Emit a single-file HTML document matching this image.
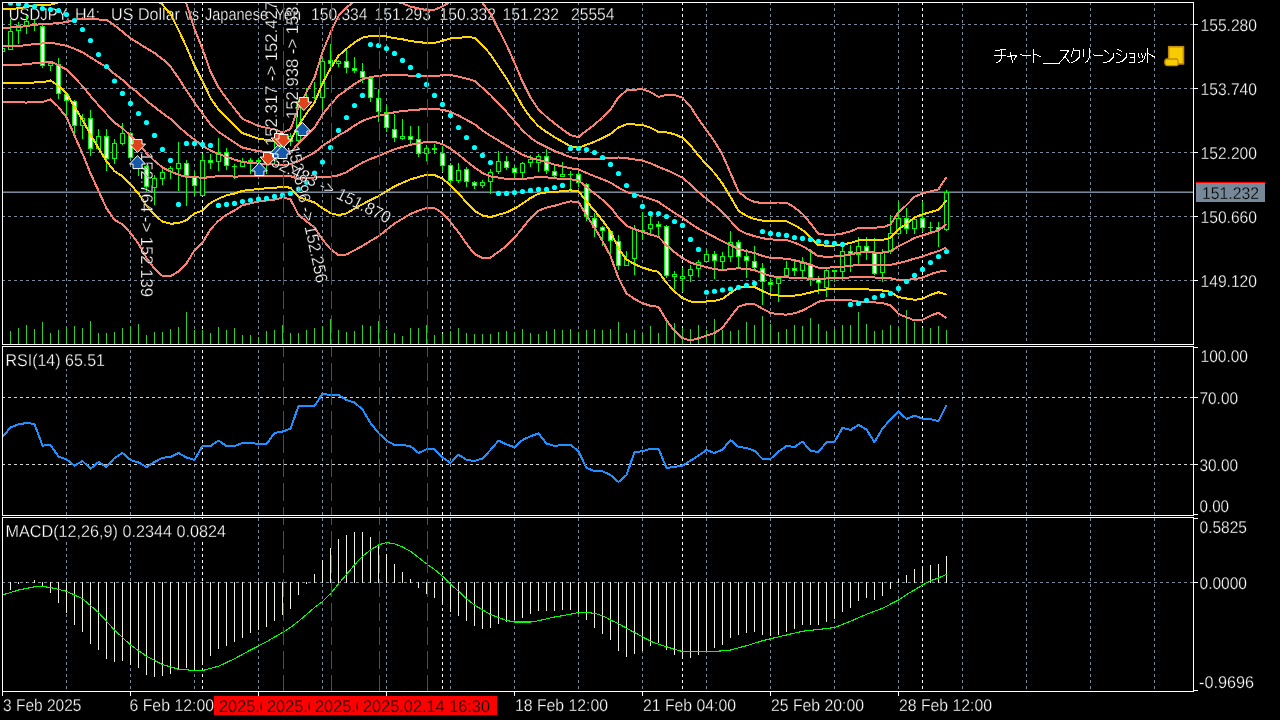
<!DOCTYPE html><html><head><meta charset="utf-8"><title>USDJPY H4</title>
<style>html,body{margin:0;padding:0;background:#000;overflow:hidden}svg{display:block;will-change:transform}text{font-family:"Liberation Sans",sans-serif;font-size:17px;fill:#fff;stroke:#000;stroke-width:.3px;text-rendering:geometricPrecision}</style></head><body>
<svg width="1280" height="720" viewBox="0 0 1280 720">
<defs>
<clipPath id="cm"><rect x="3" y="3" width="1190" height="341"/></clipPath>
<clipPath id="cr"><rect x="3" y="347" width="1190" height="168"/></clipPath>
<clipPath id="cd"><rect x="3" y="518" width="1190" height="173"/></clipPath>
<clipPath id="call"><rect x="3" y="3" width="1190" height="341"/><rect x="3" y="347" width="1190" height="168"/><rect x="3" y="518" width="1190" height="173"/></clipPath>
</defs>
<rect width="1280" height="720" fill="#000"/>
<g clip-path="url(#call)" shape-rendering="crispEdges" fill="none">
<g stroke="#778899" stroke-width="1" stroke-dasharray="3 3">
<line x1="66.5" y1="2" x2="66.5" y2="692"/>
<line x1="130.5" y1="2" x2="130.5" y2="692"/>
<line x1="194.5" y1="2" x2="194.5" y2="692"/>
<line x1="258.5" y1="2" x2="258.5" y2="692"/>
<line x1="322.5" y1="2" x2="322.5" y2="692"/>
<line x1="386.5" y1="2" x2="386.5" y2="692"/>
<line x1="450.5" y1="2" x2="450.5" y2="692"/>
<line x1="514.5" y1="2" x2="514.5" y2="692"/>
<line x1="578.5" y1="2" x2="578.5" y2="692"/>
<line x1="642.5" y1="2" x2="642.5" y2="692"/>
<line x1="706.5" y1="2" x2="706.5" y2="692"/>
<line x1="770.5" y1="2" x2="770.5" y2="692"/>
<line x1="834.5" y1="2" x2="834.5" y2="692"/>
<line x1="898.5" y1="2" x2="898.5" y2="692"/>
<line x1="962.5" y1="2" x2="962.5" y2="692"/>
<line x1="1026.5" y1="2" x2="1026.5" y2="692"/>
<line x1="1090.5" y1="2" x2="1090.5" y2="692"/>
<line x1="1154.5" y1="2" x2="1154.5" y2="692"/>
<line x1="2" y1="24.5" x2="1194" y2="24.5"/>
<line x1="2" y1="88.5" x2="1194" y2="88.5"/>
<line x1="2" y1="152.5" x2="1194" y2="152.5"/>
<line x1="2" y1="216.5" x2="1194" y2="216.5"/>
<line x1="2" y1="280.5" x2="1194" y2="280.5"/>
<line x1="2" y1="582.5" x2="1194" y2="582.5"/>
</g>
<g stroke="#fff" stroke-width="1" stroke-dasharray="3 3">
<line x1="202.5" y1="2" x2="202.5" y2="692"/>
<line x1="442.5" y1="2" x2="442.5" y2="692"/>
<line x1="682.5" y1="2" x2="682.5" y2="692"/>
<line x1="922.5" y1="2" x2="922.5" y2="692"/>
</g>
<g stroke="#d3d3d3" stroke-width="1" stroke-dasharray="3 3">
<line x1="2" y1="397.5" x2="1194" y2="397.5"/>
<line x1="2" y1="464.5" x2="1194" y2="464.5"/>
</g>
</g>
<text x="8.8" y="19.6" textLength="61" lengthAdjust="spacingAndGlyphs" >USDJPY,</text>
<text x="75" y="19.6" textLength="25" lengthAdjust="spacingAndGlyphs" >H4:</text>
<text x="111" y="19.6" textLength="69" lengthAdjust="spacingAndGlyphs" >US Dollar</text>
<text x="185" y="19.6" textLength="14" lengthAdjust="spacingAndGlyphs" >vs</text>
<text x="205" y="19.6" textLength="63" lengthAdjust="spacingAndGlyphs" >Japanese</text>
<text x="275" y="19.6" textLength="26" lengthAdjust="spacingAndGlyphs" >Yen</text>
<text x="311" y="19.6" textLength="56.5" lengthAdjust="spacingAndGlyphs" >150.334</text>
<text x="374.5" y="19.6" textLength="56.5" lengthAdjust="spacingAndGlyphs" >151.293</text>
<text x="439.5" y="19.6" textLength="56.5" lengthAdjust="spacingAndGlyphs" >150.332</text>
<text x="502.5" y="19.6" textLength="56.5" lengthAdjust="spacingAndGlyphs" >151.232</text>
<text x="571" y="19.6" textLength="43.5" lengthAdjust="spacingAndGlyphs" >25554</text>
<g clip-path="url(#cm)">
<rect x="3" y="191" width="1190" height="1" fill="#ff0000" shape-rendering="crispEdges"/>
<rect x="3" y="192" width="1190" height="1" fill="#778899" shape-rendering="crispEdges"/>
<g shape-rendering="crispEdges" fill="#32cd32">
<rect x="2" y="331" width="1" height="13"/>
<rect x="10" y="331" width="1" height="13"/>
<rect x="18" y="328" width="1" height="16"/>
<rect x="26" y="325" width="1" height="19"/>
<rect x="34" y="329" width="1" height="15"/>
<rect x="42" y="322" width="1" height="22"/>
<rect x="50" y="333" width="1" height="11"/>
<rect x="58" y="330" width="1" height="14"/>
<rect x="66" y="327" width="1" height="17"/>
<rect x="74" y="326" width="1" height="18"/>
<rect x="82" y="328" width="1" height="16"/>
<rect x="90" y="321" width="1" height="23"/>
<rect x="98" y="333" width="1" height="11"/>
<rect x="106" y="333" width="1" height="11"/>
<rect x="114" y="332" width="1" height="12"/>
<rect x="122" y="328" width="1" height="16"/>
<rect x="130" y="326" width="1" height="18"/>
<rect x="138" y="324" width="1" height="20"/>
<rect x="146" y="335" width="1" height="9"/>
<rect x="154" y="332" width="1" height="12"/>
<rect x="162" y="332" width="1" height="12"/>
<rect x="170" y="329" width="1" height="15"/>
<rect x="178" y="327" width="1" height="17"/>
<rect x="186" y="312" width="1" height="32"/>
<rect x="194" y="330" width="1" height="14"/>
<rect x="202" y="330" width="1" height="14"/>
<rect x="210" y="333" width="1" height="11"/>
<rect x="218" y="327" width="1" height="17"/>
<rect x="226" y="330" width="1" height="14"/>
<rect x="234" y="328" width="1" height="16"/>
<rect x="242" y="335" width="1" height="9"/>
<rect x="250" y="335" width="1" height="9"/>
<rect x="258" y="337" width="1" height="7"/>
<rect x="266" y="331" width="1" height="13"/>
<rect x="274" y="330" width="1" height="14"/>
<rect x="282" y="325" width="1" height="19"/>
<rect x="290" y="333" width="1" height="11"/>
<rect x="298" y="333" width="1" height="11"/>
<rect x="306" y="330" width="1" height="14"/>
<rect x="314" y="328" width="1" height="16"/>
<rect x="322" y="326" width="1" height="18"/>
<rect x="330" y="319" width="1" height="25"/>
<rect x="338" y="330" width="1" height="14"/>
<rect x="346" y="332" width="1" height="12"/>
<rect x="354" y="331" width="1" height="13"/>
<rect x="362" y="325" width="1" height="19"/>
<rect x="370" y="326" width="1" height="18"/>
<rect x="378" y="321" width="1" height="23"/>
<rect x="386" y="330" width="1" height="14"/>
<rect x="394" y="333" width="1" height="11"/>
<rect x="402" y="336" width="1" height="8"/>
<rect x="410" y="328" width="1" height="16"/>
<rect x="418" y="328" width="1" height="16"/>
<rect x="426" y="325" width="1" height="19"/>
<rect x="434" y="335" width="1" height="9"/>
<rect x="442" y="334" width="1" height="10"/>
<rect x="450" y="331" width="1" height="13"/>
<rect x="458" y="328" width="1" height="16"/>
<rect x="466" y="333" width="1" height="11"/>
<rect x="474" y="334" width="1" height="10"/>
<rect x="482" y="334" width="1" height="10"/>
<rect x="490" y="334" width="1" height="10"/>
<rect x="498" y="332" width="1" height="12"/>
<rect x="506" y="331" width="1" height="13"/>
<rect x="514" y="332" width="1" height="12"/>
<rect x="522" y="329" width="1" height="15"/>
<rect x="530" y="333" width="1" height="11"/>
<rect x="538" y="334" width="1" height="10"/>
<rect x="546" y="331" width="1" height="13"/>
<rect x="554" y="329" width="1" height="15"/>
<rect x="562" y="330" width="1" height="14"/>
<rect x="570" y="329" width="1" height="15"/>
<rect x="578" y="332" width="1" height="12"/>
<rect x="586" y="330" width="1" height="14"/>
<rect x="594" y="329" width="1" height="15"/>
<rect x="602" y="330" width="1" height="14"/>
<rect x="610" y="329" width="1" height="15"/>
<rect x="618" y="322" width="1" height="22"/>
<rect x="626" y="333" width="1" height="11"/>
<rect x="634" y="330" width="1" height="14"/>
<rect x="642" y="334" width="1" height="10"/>
<rect x="650" y="326" width="1" height="18"/>
<rect x="658" y="333" width="1" height="11"/>
<rect x="666" y="322" width="1" height="22"/>
<rect x="674" y="323" width="1" height="21"/>
<rect x="682" y="328" width="1" height="16"/>
<rect x="690" y="329" width="1" height="15"/>
<rect x="698" y="325" width="1" height="19"/>
<rect x="706" y="330" width="1" height="14"/>
<rect x="714" y="319" width="1" height="25"/>
<rect x="722" y="330" width="1" height="14"/>
<rect x="730" y="331" width="1" height="13"/>
<rect x="738" y="330" width="1" height="14"/>
<rect x="746" y="322" width="1" height="22"/>
<rect x="754" y="325" width="1" height="19"/>
<rect x="762" y="316" width="1" height="28"/>
<rect x="770" y="324" width="1" height="20"/>
<rect x="778" y="332" width="1" height="12"/>
<rect x="786" y="329" width="1" height="15"/>
<rect x="794" y="325" width="1" height="19"/>
<rect x="802" y="326" width="1" height="18"/>
<rect x="810" y="318" width="1" height="26"/>
<rect x="818" y="324" width="1" height="20"/>
<rect x="826" y="331" width="1" height="13"/>
<rect x="834" y="329" width="1" height="15"/>
<rect x="842" y="325" width="1" height="19"/>
<rect x="850" y="325" width="1" height="19"/>
<rect x="858" y="312" width="1" height="32"/>
<rect x="866" y="324" width="1" height="20"/>
<rect x="874" y="331" width="1" height="13"/>
<rect x="882" y="330" width="1" height="14"/>
<rect x="890" y="325" width="1" height="19"/>
<rect x="898" y="328" width="1" height="16"/>
<rect x="906" y="310" width="1" height="34"/>
<rect x="914" y="322" width="1" height="22"/>
<rect x="922" y="328" width="1" height="16"/>
<rect x="930" y="328" width="1" height="16"/>
<rect x="938" y="326" width="1" height="18"/>
<rect x="946" y="330" width="1" height="14"/>
</g>
<g shape-rendering="crispEdges">
<rect x="2" y="40" width="1" height="16" fill="#00ff00"/>
<rect x="0" y="48" width="5" height="4" fill="#00ff00"/>
<rect x="1" y="49" width="3" height="2" fill="#000"/>
<rect x="10" y="19" width="1" height="31" fill="#00ff00"/>
<rect x="8" y="31" width="5" height="19" fill="#00ff00"/>
<rect x="9" y="32" width="3" height="17" fill="#000"/>
<rect x="18" y="22" width="1" height="22" fill="#00ff00"/>
<rect x="16" y="25" width="5" height="6" fill="#00ff00"/>
<rect x="17" y="26" width="3" height="4" fill="#000"/>
<rect x="26" y="15" width="1" height="19" fill="#00ff00"/>
<rect x="24" y="21" width="5" height="5" fill="#00ff00"/>
<rect x="25" y="22" width="3" height="3" fill="#000"/>
<rect x="34" y="20" width="1" height="11" fill="#00ff00"/>
<rect x="32" y="23" width="5" height="1" fill="#00ff00"/>
<rect x="42" y="25" width="1" height="43" fill="#00ff00"/>
<rect x="40" y="26" width="5" height="40" fill="#00ff00"/>
<rect x="41" y="27" width="3" height="38" fill="#fff"/>
<rect x="50" y="63" width="1" height="8" fill="#00ff00"/>
<rect x="48" y="63" width="5" height="3" fill="#00ff00"/>
<rect x="49" y="64" width="3" height="1" fill="#000"/>
<rect x="58" y="58" width="1" height="41" fill="#00ff00"/>
<rect x="56" y="64" width="5" height="30" fill="#00ff00"/>
<rect x="57" y="65" width="3" height="28" fill="#fff"/>
<rect x="66" y="94" width="1" height="22" fill="#00ff00"/>
<rect x="64" y="94" width="5" height="7" fill="#00ff00"/>
<rect x="65" y="95" width="3" height="5" fill="#fff"/>
<rect x="74" y="100" width="1" height="34" fill="#00ff00"/>
<rect x="72" y="101" width="5" height="25" fill="#00ff00"/>
<rect x="73" y="102" width="3" height="23" fill="#fff"/>
<rect x="82" y="114" width="1" height="25" fill="#00ff00"/>
<rect x="80" y="118" width="5" height="8" fill="#00ff00"/>
<rect x="81" y="119" width="3" height="6" fill="#000"/>
<rect x="90" y="110" width="1" height="46" fill="#00ff00"/>
<rect x="88" y="118" width="5" height="31" fill="#00ff00"/>
<rect x="89" y="119" width="3" height="29" fill="#fff"/>
<rect x="98" y="129" width="1" height="21" fill="#00ff00"/>
<rect x="96" y="136" width="5" height="13" fill="#00ff00"/>
<rect x="97" y="137" width="3" height="11" fill="#000"/>
<rect x="106" y="129" width="1" height="42" fill="#00ff00"/>
<rect x="104" y="136" width="5" height="23" fill="#00ff00"/>
<rect x="105" y="137" width="3" height="21" fill="#fff"/>
<rect x="114" y="139" width="1" height="25" fill="#00ff00"/>
<rect x="112" y="143" width="5" height="16" fill="#00ff00"/>
<rect x="113" y="144" width="3" height="14" fill="#000"/>
<rect x="122" y="123" width="1" height="22" fill="#00ff00"/>
<rect x="120" y="133" width="5" height="11" fill="#00ff00"/>
<rect x="121" y="134" width="3" height="9" fill="#000"/>
<rect x="130" y="132" width="1" height="28" fill="#00ff00"/>
<rect x="128" y="133" width="5" height="25" fill="#00ff00"/>
<rect x="129" y="134" width="3" height="23" fill="#fff"/>
<rect x="138" y="157" width="1" height="19" fill="#00ff00"/>
<rect x="136" y="158" width="5" height="9" fill="#00ff00"/>
<rect x="137" y="159" width="3" height="7" fill="#fff"/>
<rect x="146" y="165" width="1" height="27" fill="#00ff00"/>
<rect x="144" y="166" width="5" height="21" fill="#00ff00"/>
<rect x="145" y="167" width="3" height="19" fill="#fff"/>
<rect x="154" y="175" width="1" height="30" fill="#00ff00"/>
<rect x="152" y="178" width="5" height="10" fill="#00ff00"/>
<rect x="153" y="179" width="3" height="8" fill="#000"/>
<rect x="162" y="169" width="1" height="16" fill="#00ff00"/>
<rect x="160" y="172" width="5" height="7" fill="#00ff00"/>
<rect x="161" y="173" width="3" height="5" fill="#000"/>
<rect x="170" y="166" width="1" height="13" fill="#00ff00"/>
<rect x="168" y="168" width="5" height="4" fill="#00ff00"/>
<rect x="169" y="169" width="3" height="2" fill="#000"/>
<rect x="178" y="142" width="1" height="49" fill="#00ff00"/>
<rect x="176" y="163" width="5" height="6" fill="#00ff00"/>
<rect x="177" y="164" width="3" height="4" fill="#000"/>
<rect x="186" y="160" width="1" height="46" fill="#00ff00"/>
<rect x="184" y="163" width="5" height="13" fill="#00ff00"/>
<rect x="185" y="164" width="3" height="11" fill="#fff"/>
<rect x="194" y="171" width="1" height="25" fill="#00ff00"/>
<rect x="192" y="176" width="5" height="10" fill="#00ff00"/>
<rect x="193" y="177" width="3" height="8" fill="#fff"/>
<rect x="202" y="154" width="1" height="42" fill="#00ff00"/>
<rect x="200" y="160" width="5" height="36" fill="#00ff00"/>
<rect x="201" y="161" width="3" height="34" fill="#000"/>
<rect x="210" y="154" width="1" height="15" fill="#00ff00"/>
<rect x="208" y="160" width="5" height="3" fill="#00ff00"/>
<rect x="209" y="161" width="3" height="1" fill="#fff"/>
<rect x="218" y="138" width="1" height="33" fill="#00ff00"/>
<rect x="216" y="152" width="5" height="10" fill="#00ff00"/>
<rect x="217" y="153" width="3" height="8" fill="#000"/>
<rect x="226" y="148" width="1" height="22" fill="#00ff00"/>
<rect x="224" y="152" width="5" height="14" fill="#00ff00"/>
<rect x="225" y="153" width="3" height="12" fill="#fff"/>
<rect x="234" y="164" width="1" height="15" fill="#00ff00"/>
<rect x="232" y="166" width="5" height="1" fill="#00ff00"/>
<rect x="242" y="158" width="1" height="9" fill="#00ff00"/>
<rect x="240" y="161" width="5" height="6" fill="#00ff00"/>
<rect x="241" y="162" width="3" height="4" fill="#000"/>
<rect x="250" y="158" width="1" height="16" fill="#00ff00"/>
<rect x="248" y="160" width="5" height="2" fill="#00ff00"/>
<rect x="258" y="158" width="1" height="8" fill="#00ff00"/>
<rect x="256" y="160" width="5" height="2" fill="#00ff00"/>
<rect x="266" y="156" width="1" height="18" fill="#00ff00"/>
<rect x="264" y="160" width="5" height="4" fill="#00ff00"/>
<rect x="265" y="161" width="3" height="2" fill="#fff"/>
<rect x="274" y="141" width="1" height="23" fill="#00ff00"/>
<rect x="272" y="150" width="5" height="10" fill="#00ff00"/>
<rect x="273" y="151" width="3" height="8" fill="#000"/>
<rect x="282" y="135" width="1" height="17" fill="#00ff00"/>
<rect x="280" y="142" width="5" height="8" fill="#00ff00"/>
<rect x="281" y="143" width="3" height="6" fill="#000"/>
<rect x="290" y="133" width="1" height="13" fill="#00ff00"/>
<rect x="288" y="136" width="5" height="6" fill="#00ff00"/>
<rect x="289" y="137" width="3" height="4" fill="#000"/>
<rect x="298" y="100" width="1" height="42" fill="#00ff00"/>
<rect x="296" y="104" width="5" height="37" fill="#00ff00"/>
<rect x="297" y="105" width="3" height="35" fill="#000"/>
<rect x="306" y="88" width="1" height="20" fill="#00ff00"/>
<rect x="304" y="97" width="5" height="6" fill="#00ff00"/>
<rect x="305" y="98" width="3" height="4" fill="#000"/>
<rect x="314" y="82" width="1" height="17" fill="#00ff00"/>
<rect x="312" y="97" width="5" height="1" fill="#00ff00"/>
<rect x="322" y="58" width="1" height="52" fill="#00ff00"/>
<rect x="320" y="61" width="5" height="37" fill="#00ff00"/>
<rect x="321" y="62" width="3" height="35" fill="#000"/>
<rect x="330" y="44" width="1" height="24" fill="#00ff00"/>
<rect x="328" y="60" width="5" height="4" fill="#00ff00"/>
<rect x="329" y="61" width="3" height="2" fill="#fff"/>
<rect x="338" y="60" width="1" height="7" fill="#00ff00"/>
<rect x="336" y="61" width="5" height="3" fill="#00ff00"/>
<rect x="337" y="62" width="3" height="1" fill="#000"/>
<rect x="346" y="50" width="1" height="23" fill="#00ff00"/>
<rect x="344" y="61" width="5" height="7" fill="#00ff00"/>
<rect x="345" y="62" width="3" height="5" fill="#fff"/>
<rect x="354" y="57" width="1" height="16" fill="#00ff00"/>
<rect x="352" y="68" width="5" height="3" fill="#00ff00"/>
<rect x="353" y="69" width="3" height="1" fill="#fff"/>
<rect x="362" y="63" width="1" height="20" fill="#00ff00"/>
<rect x="360" y="71" width="5" height="7" fill="#00ff00"/>
<rect x="361" y="72" width="3" height="5" fill="#fff"/>
<rect x="370" y="78" width="1" height="24" fill="#00ff00"/>
<rect x="368" y="78" width="5" height="20" fill="#00ff00"/>
<rect x="369" y="79" width="3" height="18" fill="#fff"/>
<rect x="378" y="89" width="1" height="33" fill="#00ff00"/>
<rect x="376" y="98" width="5" height="14" fill="#00ff00"/>
<rect x="377" y="99" width="3" height="12" fill="#fff"/>
<rect x="386" y="105" width="1" height="27" fill="#00ff00"/>
<rect x="384" y="112" width="5" height="16" fill="#00ff00"/>
<rect x="385" y="113" width="3" height="14" fill="#fff"/>
<rect x="394" y="114" width="1" height="28" fill="#00ff00"/>
<rect x="392" y="129" width="5" height="9" fill="#00ff00"/>
<rect x="393" y="130" width="3" height="7" fill="#fff"/>
<rect x="402" y="119" width="1" height="21" fill="#00ff00"/>
<rect x="400" y="136" width="5" height="3" fill="#00ff00"/>
<rect x="401" y="137" width="3" height="1" fill="#000"/>
<rect x="410" y="126" width="1" height="18" fill="#00ff00"/>
<rect x="408" y="136" width="5" height="4" fill="#00ff00"/>
<rect x="409" y="137" width="3" height="2" fill="#fff"/>
<rect x="418" y="126" width="1" height="31" fill="#00ff00"/>
<rect x="416" y="139" width="5" height="15" fill="#00ff00"/>
<rect x="417" y="140" width="3" height="13" fill="#fff"/>
<rect x="426" y="145" width="1" height="16" fill="#00ff00"/>
<rect x="424" y="148" width="5" height="6" fill="#00ff00"/>
<rect x="425" y="149" width="3" height="4" fill="#000"/>
<rect x="434" y="144" width="1" height="10" fill="#00ff00"/>
<rect x="432" y="148" width="5" height="2" fill="#00ff00"/>
<rect x="442" y="146" width="1" height="26" fill="#00ff00"/>
<rect x="440" y="153" width="5" height="13" fill="#00ff00"/>
<rect x="441" y="154" width="3" height="11" fill="#fff"/>
<rect x="450" y="163" width="1" height="20" fill="#00ff00"/>
<rect x="448" y="165" width="5" height="16" fill="#00ff00"/>
<rect x="449" y="166" width="3" height="14" fill="#fff"/>
<rect x="458" y="163" width="1" height="20" fill="#00ff00"/>
<rect x="456" y="170" width="5" height="11" fill="#00ff00"/>
<rect x="457" y="171" width="3" height="9" fill="#000"/>
<rect x="466" y="167" width="1" height="20" fill="#00ff00"/>
<rect x="464" y="169" width="5" height="13" fill="#00ff00"/>
<rect x="465" y="170" width="3" height="11" fill="#fff"/>
<rect x="474" y="181" width="1" height="8" fill="#00ff00"/>
<rect x="472" y="182" width="5" height="4" fill="#00ff00"/>
<rect x="473" y="183" width="3" height="2" fill="#fff"/>
<rect x="482" y="180" width="1" height="8" fill="#00ff00"/>
<rect x="480" y="182" width="5" height="4" fill="#00ff00"/>
<rect x="481" y="183" width="3" height="2" fill="#000"/>
<rect x="490" y="169" width="1" height="25" fill="#00ff00"/>
<rect x="488" y="172" width="5" height="10" fill="#00ff00"/>
<rect x="489" y="173" width="3" height="8" fill="#000"/>
<rect x="498" y="151" width="1" height="23" fill="#00ff00"/>
<rect x="496" y="161" width="5" height="11" fill="#00ff00"/>
<rect x="497" y="162" width="3" height="9" fill="#000"/>
<rect x="506" y="156" width="1" height="14" fill="#00ff00"/>
<rect x="504" y="161" width="5" height="7" fill="#00ff00"/>
<rect x="505" y="162" width="3" height="5" fill="#fff"/>
<rect x="514" y="165" width="1" height="13" fill="#00ff00"/>
<rect x="512" y="168" width="5" height="5" fill="#00ff00"/>
<rect x="513" y="169" width="3" height="3" fill="#fff"/>
<rect x="522" y="162" width="1" height="16" fill="#00ff00"/>
<rect x="520" y="163" width="5" height="10" fill="#00ff00"/>
<rect x="521" y="164" width="3" height="8" fill="#000"/>
<rect x="530" y="155" width="1" height="12" fill="#00ff00"/>
<rect x="528" y="159" width="5" height="4" fill="#00ff00"/>
<rect x="529" y="160" width="3" height="2" fill="#000"/>
<rect x="538" y="154" width="1" height="18" fill="#00ff00"/>
<rect x="536" y="156" width="5" height="7" fill="#00ff00"/>
<rect x="537" y="157" width="3" height="5" fill="#000"/>
<rect x="546" y="149" width="1" height="25" fill="#00ff00"/>
<rect x="544" y="156" width="5" height="15" fill="#00ff00"/>
<rect x="545" y="157" width="3" height="13" fill="#fff"/>
<rect x="554" y="166" width="1" height="11" fill="#00ff00"/>
<rect x="552" y="171" width="5" height="5" fill="#00ff00"/>
<rect x="553" y="172" width="3" height="3" fill="#fff"/>
<rect x="562" y="162" width="1" height="14" fill="#00ff00"/>
<rect x="560" y="174" width="5" height="3" fill="#00ff00"/>
<rect x="561" y="175" width="3" height="1" fill="#000"/>
<rect x="570" y="171" width="1" height="21" fill="#00ff00"/>
<rect x="568" y="174" width="5" height="1" fill="#00ff00"/>
<rect x="578" y="171" width="1" height="16" fill="#00ff00"/>
<rect x="576" y="174" width="5" height="9" fill="#00ff00"/>
<rect x="577" y="175" width="3" height="7" fill="#fff"/>
<rect x="586" y="183" width="1" height="38" fill="#00ff00"/>
<rect x="584" y="184" width="5" height="33" fill="#00ff00"/>
<rect x="585" y="185" width="3" height="31" fill="#fff"/>
<rect x="594" y="213" width="1" height="24" fill="#00ff00"/>
<rect x="592" y="218" width="5" height="10" fill="#00ff00"/>
<rect x="593" y="219" width="3" height="8" fill="#fff"/>
<rect x="602" y="226" width="1" height="20" fill="#00ff00"/>
<rect x="600" y="227" width="5" height="4" fill="#00ff00"/>
<rect x="601" y="228" width="3" height="2" fill="#fff"/>
<rect x="610" y="231" width="1" height="25" fill="#00ff00"/>
<rect x="608" y="231" width="5" height="10" fill="#00ff00"/>
<rect x="609" y="232" width="3" height="8" fill="#fff"/>
<rect x="618" y="235" width="1" height="35" fill="#00ff00"/>
<rect x="616" y="241" width="5" height="25" fill="#00ff00"/>
<rect x="617" y="242" width="3" height="23" fill="#fff"/>
<rect x="626" y="251" width="1" height="15" fill="#00ff00"/>
<rect x="624" y="259" width="5" height="7" fill="#00ff00"/>
<rect x="625" y="260" width="3" height="5" fill="#000"/>
<rect x="634" y="225" width="1" height="50" fill="#00ff00"/>
<rect x="632" y="229" width="5" height="30" fill="#00ff00"/>
<rect x="633" y="230" width="3" height="28" fill="#000"/>
<rect x="642" y="212" width="1" height="28" fill="#00ff00"/>
<rect x="640" y="230" width="5" height="1" fill="#00ff00"/>
<rect x="650" y="216" width="1" height="17" fill="#00ff00"/>
<rect x="648" y="224" width="5" height="5" fill="#00ff00"/>
<rect x="649" y="225" width="3" height="3" fill="#000"/>
<rect x="658" y="221" width="1" height="15" fill="#00ff00"/>
<rect x="656" y="224" width="5" height="3" fill="#00ff00"/>
<rect x="657" y="225" width="3" height="1" fill="#fff"/>
<rect x="666" y="225" width="1" height="53" fill="#00ff00"/>
<rect x="664" y="226" width="5" height="50" fill="#00ff00"/>
<rect x="665" y="227" width="3" height="48" fill="#fff"/>
<rect x="674" y="271" width="1" height="18" fill="#00ff00"/>
<rect x="672" y="274" width="5" height="3" fill="#00ff00"/>
<rect x="673" y="275" width="3" height="1" fill="#000"/>
<rect x="682" y="268" width="1" height="24" fill="#00ff00"/>
<rect x="680" y="276" width="5" height="3" fill="#00ff00"/>
<rect x="681" y="277" width="3" height="1" fill="#000"/>
<rect x="690" y="265" width="1" height="17" fill="#00ff00"/>
<rect x="688" y="269" width="5" height="7" fill="#00ff00"/>
<rect x="689" y="270" width="3" height="5" fill="#000"/>
<rect x="698" y="260" width="1" height="17" fill="#00ff00"/>
<rect x="696" y="262" width="5" height="7" fill="#00ff00"/>
<rect x="697" y="263" width="3" height="5" fill="#000"/>
<rect x="706" y="249" width="1" height="13" fill="#00ff00"/>
<rect x="704" y="254" width="5" height="8" fill="#00ff00"/>
<rect x="705" y="255" width="3" height="6" fill="#000"/>
<rect x="714" y="251" width="1" height="28" fill="#00ff00"/>
<rect x="712" y="254" width="5" height="7" fill="#00ff00"/>
<rect x="713" y="255" width="3" height="5" fill="#fff"/>
<rect x="722" y="252" width="1" height="17" fill="#00ff00"/>
<rect x="720" y="256" width="5" height="6" fill="#00ff00"/>
<rect x="721" y="257" width="3" height="4" fill="#000"/>
<rect x="730" y="231" width="1" height="31" fill="#00ff00"/>
<rect x="728" y="242" width="5" height="15" fill="#00ff00"/>
<rect x="729" y="243" width="3" height="13" fill="#000"/>
<rect x="738" y="240" width="1" height="27" fill="#00ff00"/>
<rect x="736" y="242" width="5" height="15" fill="#00ff00"/>
<rect x="737" y="243" width="3" height="13" fill="#fff"/>
<rect x="746" y="249" width="1" height="29" fill="#00ff00"/>
<rect x="744" y="256" width="5" height="5" fill="#00ff00"/>
<rect x="745" y="257" width="3" height="3" fill="#fff"/>
<rect x="754" y="246" width="1" height="23" fill="#00ff00"/>
<rect x="752" y="261" width="5" height="7" fill="#00ff00"/>
<rect x="753" y="262" width="3" height="5" fill="#fff"/>
<rect x="762" y="263" width="1" height="42" fill="#00ff00"/>
<rect x="760" y="268" width="5" height="14" fill="#00ff00"/>
<rect x="761" y="269" width="3" height="12" fill="#fff"/>
<rect x="770" y="278" width="1" height="13" fill="#00ff00"/>
<rect x="768" y="282" width="5" height="3" fill="#00ff00"/>
<rect x="769" y="283" width="3" height="1" fill="#fff"/>
<rect x="778" y="278" width="1" height="24" fill="#00ff00"/>
<rect x="776" y="278" width="5" height="6" fill="#00ff00"/>
<rect x="777" y="279" width="3" height="4" fill="#000"/>
<rect x="786" y="261" width="1" height="15" fill="#00ff00"/>
<rect x="784" y="268" width="5" height="8" fill="#00ff00"/>
<rect x="785" y="269" width="3" height="6" fill="#000"/>
<rect x="794" y="259" width="1" height="17" fill="#00ff00"/>
<rect x="792" y="268" width="5" height="3" fill="#00ff00"/>
<rect x="793" y="269" width="3" height="1" fill="#fff"/>
<rect x="802" y="257" width="1" height="21" fill="#00ff00"/>
<rect x="800" y="263" width="5" height="8" fill="#00ff00"/>
<rect x="801" y="264" width="3" height="6" fill="#000"/>
<rect x="810" y="249" width="1" height="37" fill="#00ff00"/>
<rect x="808" y="264" width="5" height="14" fill="#00ff00"/>
<rect x="809" y="265" width="3" height="12" fill="#fff"/>
<rect x="818" y="276" width="1" height="18" fill="#00ff00"/>
<rect x="816" y="279" width="5" height="4" fill="#00ff00"/>
<rect x="817" y="280" width="3" height="2" fill="#fff"/>
<rect x="826" y="269" width="1" height="28" fill="#00ff00"/>
<rect x="824" y="270" width="5" height="18" fill="#00ff00"/>
<rect x="825" y="271" width="3" height="16" fill="#000"/>
<rect x="834" y="270" width="1" height="12" fill="#00ff00"/>
<rect x="832" y="270" width="5" height="2" fill="#00ff00"/>
<rect x="842" y="247" width="1" height="33" fill="#00ff00"/>
<rect x="840" y="251" width="5" height="21" fill="#00ff00"/>
<rect x="841" y="252" width="3" height="19" fill="#000"/>
<rect x="850" y="245" width="1" height="27" fill="#00ff00"/>
<rect x="848" y="251" width="5" height="3" fill="#00ff00"/>
<rect x="849" y="252" width="3" height="1" fill="#fff"/>
<rect x="858" y="237" width="1" height="27" fill="#00ff00"/>
<rect x="856" y="246" width="5" height="9" fill="#00ff00"/>
<rect x="857" y="247" width="3" height="7" fill="#000"/>
<rect x="866" y="237" width="1" height="23" fill="#00ff00"/>
<rect x="864" y="246" width="5" height="6" fill="#00ff00"/>
<rect x="865" y="247" width="3" height="4" fill="#fff"/>
<rect x="874" y="238" width="1" height="37" fill="#00ff00"/>
<rect x="872" y="253" width="5" height="21" fill="#00ff00"/>
<rect x="873" y="254" width="3" height="19" fill="#fff"/>
<rect x="882" y="249" width="1" height="33" fill="#00ff00"/>
<rect x="880" y="252" width="5" height="21" fill="#00ff00"/>
<rect x="881" y="253" width="3" height="19" fill="#000"/>
<rect x="890" y="215" width="1" height="39" fill="#00ff00"/>
<rect x="888" y="233" width="5" height="19" fill="#00ff00"/>
<rect x="889" y="234" width="3" height="17" fill="#000"/>
<rect x="898" y="202" width="1" height="33" fill="#00ff00"/>
<rect x="896" y="218" width="5" height="16" fill="#00ff00"/>
<rect x="897" y="219" width="3" height="14" fill="#000"/>
<rect x="906" y="208" width="1" height="26" fill="#00ff00"/>
<rect x="904" y="218" width="5" height="11" fill="#00ff00"/>
<rect x="905" y="219" width="3" height="9" fill="#fff"/>
<rect x="914" y="219" width="1" height="15" fill="#00ff00"/>
<rect x="912" y="219" width="5" height="10" fill="#00ff00"/>
<rect x="913" y="220" width="3" height="8" fill="#000"/>
<rect x="922" y="201" width="1" height="31" fill="#00ff00"/>
<rect x="920" y="218" width="5" height="10" fill="#00ff00"/>
<rect x="921" y="219" width="3" height="8" fill="#fff"/>
<rect x="930" y="222" width="1" height="12" fill="#00ff00"/>
<rect x="928" y="227" width="5" height="1" fill="#00ff00"/>
<rect x="938" y="222" width="1" height="25" fill="#00ff00"/>
<rect x="936" y="227" width="5" height="3" fill="#00ff00"/>
<rect x="937" y="228" width="3" height="1" fill="#fff"/>
<rect x="946" y="190" width="1" height="41" fill="#00ff00"/>
<rect x="944" y="192" width="5" height="38" fill="#00ff00"/>
<rect x="945" y="193" width="3" height="36" fill="#000"/>
</g>
<g fill="none" stroke-width="2" stroke-linejoin="round" shape-rendering="crispEdges">
<polyline points="2.5,-8.9 10.5,-9.6 18.5,-10.5 26.5,-12.2 34.5,-13.7 42.5,-14.8 50.5,-14.4 58.5,-18.5 66.5,-25.6 74.5,-37.8 82.5,-49.1 90.5,-58.5 98.5,-66.2 106.5,-74.6 114.5,-72.0 122.5,-64.7 130.5,-58.8 138.5,-57.3 146.5,-56.6 154.5,-54.9 162.5,-49.5 170.5,-38.5 178.5,-18.6 186.5,4.0 194.5,28.8 202.5,48.8 210.5,71.6 218.5,87.4 226.5,98.4 234.5,108.7 242.5,118.8 250.5,122.4 258.5,126.0 266.5,127.8 274.5,129.3 282.5,132.5 290.5,129.1 298.5,107.6 306.5,91.9 314.5,77.7 322.5,52.2 330.5,32.4 338.5,15.8 346.5,7.6 354.5,0.9 362.5,-4.0 370.5,-4.9 378.5,-4.4 386.5,-2.2 394.5,1.1 402.5,3.4 410.5,6.6 418.5,8.4 426.5,9.9 434.5,9.8 442.5,6.4 450.5,1.7 458.5,-1.2 466.5,-4.0 474.5,-5.7 482.5,2.9 490.5,13.7 498.5,29.3 506.5,44.9 514.5,62.7 522.5,81.7 530.5,97.6 538.5,109.3 546.5,116.9 554.5,123.4 562.5,129.5 570.5,135.1 578.5,137.1 586.5,130.5 594.5,124.6 602.5,117.5 610.5,109.5 618.5,97.2 626.5,90.5 634.5,89.6 642.5,89.3 650.5,92.1 658.5,96.9 666.5,94.8 674.5,94.9 682.5,97.8 690.5,106.5 698.5,119.1 706.5,130.3 714.5,141.2 722.5,154.8 730.5,173.0 738.5,191.6 746.5,198.2 754.5,202.1 762.5,202.9 770.5,202.6 778.5,202.5 786.5,202.7 794.5,207.4 802.5,213.9 810.5,223.4 818.5,233.8 826.5,234.8 834.5,234.7 842.5,233.5 850.5,231.4 858.5,228.0 866.5,227.7 874.5,227.6 882.5,227.3 890.5,224.4 898.5,212.3 906.5,205.1 914.5,196.8 922.5,193.3 930.5,191.4 938.5,189.3 946.5,176.9" stroke="#fa8072"/>
<polyline points="2.5,9.5 10.5,8.9 18.5,8.3 26.5,7.0 34.5,5.5 42.5,4.7 50.5,4.6 58.5,2.4 66.5,-1.8 74.5,-8.9 82.5,-15.3 90.5,-19.9 98.5,-23.3 106.5,-27.4 114.5,-23.3 122.5,-16.5 130.5,-10.2 138.5,-7.1 146.5,-4.1 154.5,-1.0 162.5,4.7 170.5,14.0 178.5,29.8 186.5,47.2 194.5,65.7 202.5,81.2 210.5,97.9 218.5,109.6 226.5,117.8 234.5,125.7 242.5,133.2 250.5,135.9 258.5,138.6 266.5,139.9 274.5,141.0 282.5,143.3 290.5,140.9 298.5,125.4 306.5,113.5 314.5,102.7 322.5,83.4 330.5,68.5 338.5,55.7 346.5,48.8 354.5,42.5 362.5,37.6 370.5,36.1 378.5,35.7 386.5,36.5 394.5,38.2 402.5,39.3 410.5,41.1 418.5,42.1 426.5,42.9 434.5,42.9 442.5,40.8 450.5,38.4 458.5,37.7 466.5,37.3 474.5,37.6 482.5,45.4 490.5,54.3 498.5,66.4 506.5,78.4 514.5,91.9 522.5,106.0 530.5,117.6 538.5,126.2 546.5,132.0 554.5,137.1 562.5,141.8 570.5,146.2 578.5,147.9 586.5,144.7 594.5,141.8 602.5,138.1 610.5,133.9 618.5,127.4 626.5,124.3 634.5,124.5 642.5,125.0 650.5,127.7 658.5,131.9 666.5,132.4 674.5,134.2 682.5,137.8 690.5,145.5 698.5,155.6 706.5,164.5 714.5,173.1 722.5,183.6 730.5,197.0 738.5,210.8 746.5,215.9 754.5,219.1 762.5,220.6 770.5,221.0 778.5,221.1 786.5,221.3 794.5,225.1 802.5,230.0 810.5,237.2 818.5,245.1 826.5,245.7 834.5,245.6 842.5,244.6 850.5,242.9 858.5,240.3 866.5,240.0 874.5,240.1 882.5,239.9 890.5,237.8 898.5,229.2 906.5,223.8 914.5,217.4 922.5,214.4 930.5,212.1 938.5,209.9 946.5,200.4" stroke="#ffd700"/>
<polyline points="2.5,27.9 10.5,27.5 18.5,27.1 26.5,26.1 34.5,24.8 42.5,24.1 50.5,23.6 58.5,23.3 66.5,22.0 74.5,20.0 82.5,18.5 90.5,18.7 98.5,19.5 106.5,19.7 114.5,25.3 122.5,31.7 130.5,38.5 138.5,43.1 146.5,48.3 154.5,53.0 162.5,59.0 170.5,66.4 178.5,78.1 186.5,90.4 194.5,102.6 202.5,113.5 210.5,124.2 218.5,131.9 226.5,137.2 234.5,142.6 242.5,147.6 250.5,149.4 258.5,151.2 266.5,152.0 274.5,152.8 282.5,154.1 290.5,152.6 298.5,143.3 306.5,135.1 314.5,127.6 322.5,114.6 330.5,104.6 338.5,95.6 346.5,89.9 354.5,84.0 362.5,79.3 370.5,77.0 378.5,75.8 386.5,75.1 394.5,75.2 402.5,75.1 410.5,75.7 418.5,75.8 426.5,75.9 434.5,75.9 442.5,75.3 450.5,75.1 458.5,76.6 466.5,78.6 474.5,80.9 482.5,87.9 490.5,95.0 498.5,103.5 506.5,111.9 514.5,121.1 522.5,130.4 530.5,137.7 538.5,143.1 546.5,147.1 554.5,150.9 562.5,154.1 570.5,157.2 578.5,158.7 586.5,158.8 594.5,159.0 602.5,158.6 610.5,158.3 618.5,157.5 626.5,158.2 634.5,159.4 642.5,160.6 650.5,163.3 658.5,166.9 666.5,170.0 674.5,173.6 682.5,177.9 690.5,184.5 698.5,192.1 706.5,198.7 714.5,205.1 722.5,212.4 730.5,221.0 738.5,229.9 746.5,233.6 754.5,236.1 762.5,238.2 770.5,239.4 778.5,239.7 786.5,240.0 794.5,242.7 802.5,246.1 810.5,251.0 818.5,256.4 826.5,256.6 834.5,256.5 842.5,255.7 850.5,254.4 858.5,252.6 866.5,252.3 874.5,252.5 882.5,252.6 890.5,251.3 898.5,246.2 906.5,242.4 914.5,238.0 922.5,235.5 930.5,232.8 938.5,230.5 946.5,224.0" stroke="#fa8072"/>
<polyline points="2.5,46.3 10.5,46.1 18.5,45.9 26.5,45.2 34.5,44.0 42.5,43.5 50.5,42.6 58.5,44.2 66.5,45.8 74.5,48.8 82.5,52.3 90.5,57.4 98.5,62.4 106.5,66.9 114.5,74.0 122.5,79.9 130.5,87.1 138.5,93.3 146.5,100.7 154.5,106.9 162.5,113.2 170.5,118.9 178.5,126.5 186.5,133.6 194.5,139.5 202.5,145.8 210.5,150.5 218.5,154.1 226.5,156.6 234.5,159.6 242.5,162.0 250.5,162.9 258.5,163.7 266.5,164.1 274.5,164.5 282.5,164.9 290.5,164.3 298.5,161.2 306.5,156.7 314.5,152.6 322.5,145.9 330.5,140.7 338.5,135.4 346.5,131.1 354.5,125.6 362.5,120.9 370.5,118.0 378.5,115.9 386.5,113.8 394.5,112.3 402.5,111.0 410.5,110.3 418.5,109.6 426.5,108.9 434.5,109.0 442.5,109.7 450.5,111.9 458.5,115.5 466.5,119.9 474.5,124.2 482.5,130.4 490.5,135.7 498.5,140.5 506.5,145.4 514.5,150.2 522.5,154.8 530.5,157.8 538.5,160.0 546.5,162.2 554.5,164.6 562.5,166.4 570.5,168.3 578.5,169.5 586.5,173.0 594.5,176.2 602.5,179.2 610.5,182.7 618.5,187.6 626.5,192.0 634.5,194.3 642.5,196.3 650.5,198.9 658.5,201.9 666.5,207.6 674.5,212.9 682.5,217.9 690.5,223.5 698.5,228.6 706.5,233.0 714.5,237.1 722.5,241.3 730.5,245.0 738.5,249.1 746.5,251.2 754.5,253.1 762.5,255.8 770.5,257.8 778.5,258.4 786.5,258.6 794.5,260.3 802.5,262.2 810.5,264.8 818.5,267.7 826.5,267.6 834.5,267.4 842.5,266.8 850.5,265.9 858.5,264.8 866.5,264.7 874.5,265.0 882.5,265.2 890.5,264.8 898.5,263.1 906.5,261.1 914.5,258.6 922.5,256.5 930.5,253.5 938.5,251.1 946.5,247.5" stroke="#fa8072"/>
<polyline points="2.5,64.7 10.5,64.7 18.5,64.7 26.5,64.3 34.5,63.2 42.5,63.0 50.5,61.6 58.5,65.1 66.5,69.6 74.5,77.7 82.5,86.1 90.5,96.0 98.5,105.2 106.5,114.0 114.5,122.6 122.5,128.1 130.5,135.8 138.5,143.5 146.5,153.2 154.5,160.9 162.5,167.5 170.5,171.3 178.5,174.8 186.5,176.9 194.5,176.5 202.5,178.2 210.5,176.8 218.5,176.3 226.5,176.0 234.5,176.6 242.5,176.4 250.5,176.4 258.5,176.3 266.5,176.2 274.5,176.2 282.5,175.8 290.5,176.1 298.5,179.0 306.5,178.2 314.5,177.5 322.5,177.1 330.5,176.8 338.5,175.3 346.5,172.2 354.5,167.1 362.5,162.6 370.5,158.9 378.5,156.1 386.5,152.5 394.5,149.4 402.5,146.9 410.5,144.8 418.5,143.3 426.5,141.9 434.5,142.0 442.5,144.1 450.5,148.6 458.5,154.5 466.5,161.2 474.5,167.5 482.5,173.0 490.5,176.4 498.5,177.6 506.5,178.9 514.5,179.4 522.5,179.2 530.5,177.9 538.5,176.9 546.5,177.3 554.5,178.4 562.5,178.7 570.5,179.3 578.5,180.3 586.5,187.1 594.5,193.4 602.5,199.8 610.5,207.1 618.5,217.8 626.5,225.9 634.5,229.2 642.5,231.9 650.5,234.5 658.5,236.9 666.5,245.2 674.5,252.2 682.5,258.0 690.5,262.5 698.5,265.1 706.5,267.2 714.5,269.0 722.5,270.1 730.5,269.0 738.5,268.3 746.5,268.9 754.5,270.1 762.5,273.4 770.5,276.1 778.5,277.0 786.5,277.3 794.5,278.0 802.5,278.3 810.5,278.7 818.5,279.1 826.5,278.5 834.5,278.3 842.5,277.9 850.5,277.4 858.5,277.1 866.5,277.0 874.5,277.5 882.5,277.8 890.5,278.3 898.5,280.1 906.5,279.8 914.5,279.2 922.5,277.6 930.5,274.2 938.5,271.6 946.5,271.0" stroke="#fa8072"/>
<polyline points="2.5,83.1 10.5,83.3 18.5,83.4 26.5,83.5 34.5,82.4 42.5,82.4 50.5,80.5 58.5,86.0 66.5,93.4 74.5,106.6 82.5,119.9 90.5,134.6 98.5,148.1 106.5,161.2 114.5,171.3 122.5,176.2 130.5,184.4 138.5,193.6 146.5,205.6 154.5,214.8 162.5,221.7 170.5,223.7 178.5,223.2 186.5,220.1 194.5,213.4 202.5,210.5 210.5,203.0 218.5,198.6 226.5,195.4 234.5,193.5 242.5,190.8 250.5,189.9 258.5,188.9 266.5,188.3 274.5,188.0 282.5,186.6 290.5,187.8 298.5,196.9 306.5,199.8 314.5,202.5 322.5,208.3 330.5,213.0 338.5,215.2 346.5,213.4 354.5,208.7 362.5,204.2 370.5,199.9 378.5,196.2 386.5,191.2 394.5,186.4 402.5,182.8 410.5,179.4 418.5,177.0 426.5,174.9 434.5,175.1 442.5,178.6 450.5,185.3 458.5,193.4 466.5,202.4 474.5,210.8 482.5,215.5 490.5,217.1 498.5,214.7 506.5,212.4 514.5,208.6 522.5,203.6 530.5,198.0 538.5,193.8 546.5,192.4 554.5,192.1 562.5,191.1 570.5,190.4 578.5,191.2 586.5,201.3 594.5,210.6 602.5,220.4 610.5,231.6 618.5,247.9 626.5,259.7 634.5,264.1 642.5,267.6 650.5,270.1 658.5,271.9 666.5,282.8 674.5,291.5 682.5,298.1 690.5,301.5 698.5,301.7 706.5,301.5 714.5,301.0 722.5,298.9 730.5,293.0 738.5,287.5 746.5,286.6 754.5,287.1 762.5,291.1 770.5,294.5 778.5,295.6 786.5,295.9 794.5,295.6 802.5,294.4 810.5,292.5 818.5,290.4 826.5,289.4 834.5,289.2 842.5,289.0 850.5,288.8 858.5,289.4 866.5,289.3 874.5,289.9 882.5,290.5 890.5,291.8 898.5,297.0 906.5,298.5 914.5,299.8 922.5,298.7 930.5,294.9 938.5,292.2 946.5,294.6" stroke="#ffd700"/>
<polyline points="2.5,101.5 10.5,101.8 18.5,102.2 26.5,102.6 34.5,101.7 42.5,101.9 50.5,99.5 58.5,107.0 66.5,117.3 74.5,135.5 82.5,153.7 90.5,173.3 98.5,190.9 106.5,208.3 114.5,219.9 122.5,224.4 130.5,233.1 138.5,243.8 146.5,258.0 154.5,268.8 162.5,276.0 170.5,276.2 178.5,271.5 186.5,263.3 194.5,250.3 202.5,242.8 210.5,229.3 218.5,220.8 226.5,214.7 234.5,210.5 242.5,205.2 250.5,203.4 258.5,201.5 266.5,200.4 274.5,199.7 282.5,197.4 290.5,199.5 298.5,214.8 306.5,221.4 314.5,227.5 322.5,239.5 330.5,249.1 338.5,255.1 346.5,254.5 354.5,250.2 362.5,245.9 370.5,240.8 378.5,236.3 386.5,229.8 394.5,223.5 402.5,218.7 410.5,213.9 418.5,210.8 426.5,207.9 434.5,208.1 442.5,213.0 450.5,222.0 458.5,232.3 466.5,243.7 474.5,254.1 482.5,258.0 490.5,257.7 498.5,251.8 506.5,245.9 514.5,237.8 522.5,228.0 530.5,218.1 538.5,210.7 546.5,207.6 554.5,205.8 562.5,203.4 570.5,201.4 578.5,202.0 586.5,215.5 594.5,227.8 602.5,240.9 610.5,256.0 618.5,278.1 626.5,293.5 634.5,299.0 642.5,303.2 650.5,305.8 658.5,306.9 666.5,320.4 674.5,330.9 682.5,338.1 690.5,340.5 698.5,338.2 706.5,335.7 714.5,333.0 722.5,327.8 730.5,317.0 738.5,306.6 746.5,304.2 754.5,304.1 762.5,308.7 770.5,312.9 778.5,314.3 786.5,314.6 794.5,313.3 802.5,310.5 810.5,306.3 818.5,301.7 826.5,300.3 834.5,300.1 842.5,300.1 850.5,300.3 858.5,301.6 866.5,301.6 874.5,302.4 882.5,303.1 890.5,305.3 898.5,314.0 906.5,317.2 914.5,320.4 922.5,319.8 930.5,315.6 938.5,312.8 946.5,318.1" stroke="#fa8072"/>
</g>
<g fill="#00ffff">
<circle cx="10.5" cy="3" r="2.6"/>
<circle cx="18.5" cy="4" r="2.6"/>
<circle cx="26.5" cy="5.5" r="2.6"/>
<circle cx="34.5" cy="6.5" r="2.6"/>
<circle cx="42.5" cy="8.5" r="2.6"/>
<circle cx="50.5" cy="9.5" r="2.6"/>
<circle cx="58.5" cy="10.5" r="2.6"/>
<circle cx="66.5" cy="14.5" r="2.6"/>
<circle cx="74.5" cy="20.5" r="2.6"/>
<circle cx="82.5" cy="29.5" r="2.6"/>
<circle cx="90.5" cy="40.5" r="2.6"/>
<circle cx="98.5" cy="54.5" r="2.6"/>
<circle cx="106.5" cy="66.5" r="2.6"/>
<circle cx="114.5" cy="81" r="2.6"/>
<circle cx="122.5" cy="93.4" r="2.6"/>
<circle cx="130.5" cy="103.4" r="2.6"/>
<circle cx="138.5" cy="113.5" r="2.6"/>
<circle cx="146.5" cy="122.5" r="2.6"/>
<circle cx="154.5" cy="135.4" r="2.6"/>
<circle cx="162.5" cy="149.4" r="2.6"/>
<circle cx="170.5" cy="160.4" r="2.6"/>
<circle cx="178.5" cy="204.4" r="2.6"/>
<circle cx="186.5" cy="143.4" r="2.6"/>
<circle cx="194.5" cy="143.4" r="2.6"/>
<circle cx="202.5" cy="144.4" r="2.6"/>
<circle cx="210.5" cy="145.4" r="2.6"/>
<circle cx="218.5" cy="205.4" r="2.6"/>
<circle cx="226.5" cy="204.4" r="2.6"/>
<circle cx="234.5" cy="203.4" r="2.6"/>
<circle cx="242.5" cy="201.5" r="2.6"/>
<circle cx="250.5" cy="200.25" r="2.6"/>
<circle cx="258.5" cy="199" r="2.6"/>
<circle cx="266.5" cy="198.4" r="2.6"/>
<circle cx="274.5" cy="196.4" r="2.6"/>
<circle cx="282.5" cy="195" r="2.6"/>
<circle cx="290.5" cy="193.4" r="2.6"/>
<circle cx="298.5" cy="189" r="2.6"/>
<circle cx="306.5" cy="182.3" r="2.6"/>
<circle cx="314.5" cy="173" r="2.6"/>
<circle cx="322.5" cy="162" r="2.6"/>
<circle cx="330.5" cy="147.5" r="2.6"/>
<circle cx="338.5" cy="130.4" r="2.6"/>
<circle cx="346.5" cy="117.5" r="2.6"/>
<circle cx="354.5" cy="105.5" r="2.6"/>
<circle cx="362.5" cy="95.4" r="2.6"/>
<circle cx="370.5" cy="44.5" r="2.6"/>
<circle cx="378.5" cy="45.5" r="2.6"/>
<circle cx="386.5" cy="48.5" r="2.6"/>
<circle cx="394.5" cy="53.4" r="2.6"/>
<circle cx="402.5" cy="60.4" r="2.6"/>
<circle cx="410.5" cy="67.4" r="2.6"/>
<circle cx="418.5" cy="75.5" r="2.6"/>
<circle cx="426.5" cy="84.4" r="2.6"/>
<circle cx="434.5" cy="95.4" r="2.6"/>
<circle cx="442.5" cy="104.4" r="2.6"/>
<circle cx="450.5" cy="115.4" r="2.6"/>
<circle cx="458.5" cy="127.5" r="2.6"/>
<circle cx="466.5" cy="137.5" r="2.6"/>
<circle cx="474.5" cy="147.5" r="2.6"/>
<circle cx="482.5" cy="155.4" r="2.6"/>
<circle cx="490.5" cy="162.5" r="2.6"/>
<circle cx="498.5" cy="193.4" r="2.6"/>
<circle cx="506.5" cy="193.4" r="2.6"/>
<circle cx="514.5" cy="192.5" r="2.6"/>
<circle cx="522.5" cy="191.5" r="2.6"/>
<circle cx="530.5" cy="190.4" r="2.6"/>
<circle cx="538.5" cy="189.4" r="2.6"/>
<circle cx="546.5" cy="189.4" r="2.6"/>
<circle cx="554.5" cy="187.5" r="2.6"/>
<circle cx="562.5" cy="185.4" r="2.6"/>
<circle cx="570.5" cy="148.5" r="2.6"/>
<circle cx="578.5" cy="148.5" r="2.6"/>
<circle cx="586.5" cy="149.6" r="2.6"/>
<circle cx="594.5" cy="152.5" r="2.6"/>
<circle cx="602.5" cy="157.5" r="2.6"/>
<circle cx="610.5" cy="164.4" r="2.6"/>
<circle cx="618.5" cy="173.5" r="2.6"/>
<circle cx="626.5" cy="185.5" r="2.6"/>
<circle cx="634.5" cy="195.4" r="2.6"/>
<circle cx="642.5" cy="206.4" r="2.6"/>
<circle cx="650.5" cy="213.5" r="2.6"/>
<circle cx="658.5" cy="213.5" r="2.6"/>
<circle cx="666.5" cy="216.5" r="2.6"/>
<circle cx="674.5" cy="221.5" r="2.6"/>
<circle cx="682.5" cy="225.4" r="2.6"/>
<circle cx="690.5" cy="239.4" r="2.6"/>
<circle cx="698.5" cy="249.4" r="2.6"/>
<circle cx="706.5" cy="292.25" r="2.6"/>
<circle cx="714.5" cy="291.25" r="2.6"/>
<circle cx="722.5" cy="290" r="2.6"/>
<circle cx="730.5" cy="289" r="2.6"/>
<circle cx="738.5" cy="287.3" r="2.6"/>
<circle cx="746.5" cy="285.4" r="2.6"/>
<circle cx="754.5" cy="283.4" r="2.6"/>
<circle cx="762.5" cy="231.5" r="2.6"/>
<circle cx="770.5" cy="233.4" r="2.6"/>
<circle cx="778.5" cy="234.4" r="2.6"/>
<circle cx="786.5" cy="235.4" r="2.6"/>
<circle cx="794.5" cy="237.5" r="2.6"/>
<circle cx="802.5" cy="238.4" r="2.6"/>
<circle cx="810.5" cy="239.4" r="2.6"/>
<circle cx="818.5" cy="241.25" r="2.6"/>
<circle cx="826.5" cy="242.25" r="2.6"/>
<circle cx="834.5" cy="243.4" r="2.6"/>
<circle cx="842.5" cy="244.4" r="2.6"/>
<circle cx="850.5" cy="304.4" r="2.6"/>
<circle cx="858.5" cy="303.4" r="2.6"/>
<circle cx="866.5" cy="300.4" r="2.6"/>
<circle cx="874.5" cy="297.5" r="2.6"/>
<circle cx="882.5" cy="295.4" r="2.6"/>
<circle cx="890.5" cy="293.4" r="2.6"/>
<circle cx="898.5" cy="288.4" r="2.6"/>
<circle cx="906.5" cy="281.5" r="2.6"/>
<circle cx="914.5" cy="275.4" r="2.6"/>
<circle cx="922.5" cy="269.4" r="2.6"/>
<circle cx="930.5" cy="262.5" r="2.6"/>
<circle cx="938.5" cy="256.5" r="2.6"/>
<circle cx="946.5" cy="251.5" r="2.6"/>
</g>
</g>
<g clip-path="url(#cr)">
<polyline points="2.5,437 10.5,427.5 18.5,424.4 26.5,423 34.5,424 42.5,445.6 50.5,445 58.5,456.5 66.5,459.4 74.5,465.6 82.5,461 90.5,468.75 98.5,462 106.5,467 114.5,458 122.5,453 130.5,460 138.5,462.5 146.5,467 154.5,462 162.5,457.75 170.5,457 178.5,453 186.5,457.5 194.5,460 202.5,446 210.5,446 218.5,440.6 226.5,446 234.5,446 242.5,443 250.5,443 258.5,444 266.5,444 274.5,433 282.5,431.5 290.5,428.75 298.5,406 306.5,406 314.5,406 322.5,393.75 330.5,395 338.5,395 346.5,400 354.5,402.5 362.5,409.4 370.5,423 378.5,433 386.5,440.6 394.5,445 402.5,445 410.5,446.25 418.5,453 426.5,449.4 434.5,449.4 442.5,457.5 450.5,463 458.5,454.75 466.5,459.75 474.5,461 482.5,458.5 490.5,450 498.5,440.6 506.5,444.4 514.5,447.25 522.5,440 530.5,436.25 538.5,433.5 546.5,443.5 554.5,446 562.5,444.75 570.5,444.75 578.5,451.25 586.5,468 594.5,471 602.5,471.25 610.5,475 618.5,482 626.5,475 634.5,452 642.5,451.25 650.5,448.75 658.5,448.75 666.5,468 674.5,467 682.5,465.6 690.5,460.6 698.5,455.6 706.5,450 714.5,453 722.5,449.75 730.5,440 738.5,447 746.5,448 754.5,450.8 762.5,459 770.5,459 778.5,451.5 786.5,446 794.5,447 802.5,441.6 810.5,451 818.5,452 826.5,442.25 834.5,442 842.5,427.75 850.5,430 858.5,424.75 866.5,429.6 874.5,442.25 882.5,428.4 890.5,419.4 898.5,411.4 906.5,419 914.5,415.6 922.5,418.75 930.5,419 938.5,421.25 946.5,404.75" fill="none" stroke="#1e90ff" stroke-width="2" stroke-linejoin="round" shape-rendering="crispEdges"/>
</g>
<rect x="3" y="348" width="104" height="21" fill="#000"/>
<text x="5.5" y="365.5" textLength="99.5" lengthAdjust="spacingAndGlyphs" >RSI(14) 65.51</text>
<g clip-path="url(#cd)">
<g shape-rendering="crispEdges" fill="#f0f0dc">
<rect x="2" y="582" width="1" height="12"/>
<rect x="10" y="582" width="1" height="8"/>
<rect x="18" y="582" width="1" height="2"/>
<rect x="26" y="582" width="1" height="1"/>
<rect x="34" y="580" width="1" height="3"/>
<rect x="42" y="582" width="1" height="4"/>
<rect x="50" y="582" width="1" height="11"/>
<rect x="58" y="582" width="1" height="21"/>
<rect x="66" y="582" width="1" height="31"/>
<rect x="74" y="582" width="1" height="43"/>
<rect x="82" y="582" width="1" height="50"/>
<rect x="90" y="582" width="1" height="62"/>
<rect x="98" y="582" width="1" height="68"/>
<rect x="106" y="582" width="1" height="77"/>
<rect x="114" y="582" width="1" height="80"/>
<rect x="122" y="582" width="1" height="79"/>
<rect x="130" y="582" width="1" height="83"/>
<rect x="138" y="582" width="1" height="86"/>
<rect x="146" y="582" width="1" height="93"/>
<rect x="154" y="582" width="1" height="95"/>
<rect x="162" y="582" width="1" height="94"/>
<rect x="170" y="582" width="1" height="92"/>
<rect x="178" y="582" width="1" height="88"/>
<rect x="186" y="582" width="1" height="86"/>
<rect x="194" y="582" width="1" height="88"/>
<rect x="202" y="582" width="1" height="82"/>
<rect x="210" y="582" width="1" height="74"/>
<rect x="218" y="582" width="1" height="67"/>
<rect x="226" y="582" width="1" height="64"/>
<rect x="234" y="582" width="1" height="60"/>
<rect x="242" y="582" width="1" height="56"/>
<rect x="250" y="582" width="1" height="51"/>
<rect x="258" y="582" width="1" height="48"/>
<rect x="266" y="582" width="1" height="45"/>
<rect x="274" y="582" width="1" height="39"/>
<rect x="282" y="582" width="1" height="33"/>
<rect x="290" y="582" width="1" height="27"/>
<rect x="298" y="582" width="1" height="13"/>
<rect x="306" y="582" width="1" height="2"/>
<rect x="314" y="574" width="1" height="9"/>
<rect x="322" y="560" width="1" height="23"/>
<rect x="330" y="548" width="1" height="35"/>
<rect x="338" y="539" width="1" height="44"/>
<rect x="346" y="535" width="1" height="48"/>
<rect x="354" y="532" width="1" height="51"/>
<rect x="362" y="532" width="1" height="51"/>
<rect x="370" y="537" width="1" height="46"/>
<rect x="378" y="545" width="1" height="38"/>
<rect x="386" y="554" width="1" height="29"/>
<rect x="394" y="564" width="1" height="19"/>
<rect x="402" y="572" width="1" height="11"/>
<rect x="410" y="579" width="1" height="4"/>
<rect x="418" y="582" width="1" height="6"/>
<rect x="426" y="582" width="1" height="12"/>
<rect x="434" y="582" width="1" height="16"/>
<rect x="442" y="582" width="1" height="23"/>
<rect x="450" y="582" width="1" height="30"/>
<rect x="458" y="582" width="1" height="34"/>
<rect x="466" y="582" width="1" height="39"/>
<rect x="474" y="582" width="1" height="44"/>
<rect x="482" y="582" width="1" height="47"/>
<rect x="490" y="582" width="1" height="46"/>
<rect x="498" y="582" width="1" height="42"/>
<rect x="506" y="582" width="1" height="40"/>
<rect x="514" y="582" width="1" height="38"/>
<rect x="522" y="582" width="1" height="36"/>
<rect x="530" y="582" width="1" height="32"/>
<rect x="538" y="582" width="1" height="29"/>
<rect x="546" y="582" width="1" height="29"/>
<rect x="554" y="582" width="1" height="29"/>
<rect x="562" y="582" width="1" height="28"/>
<rect x="570" y="582" width="1" height="28"/>
<rect x="578" y="582" width="1" height="32"/>
<rect x="586" y="582" width="1" height="38"/>
<rect x="594" y="582" width="1" height="46"/>
<rect x="602" y="582" width="1" height="52"/>
<rect x="610" y="582" width="1" height="58"/>
<rect x="618" y="582" width="1" height="69"/>
<rect x="626" y="582" width="1" height="75"/>
<rect x="634" y="582" width="1" height="72"/>
<rect x="642" y="582" width="1" height="69"/>
<rect x="650" y="582" width="1" height="64"/>
<rect x="658" y="582" width="1" height="61"/>
<rect x="666" y="582" width="1" height="68"/>
<rect x="674" y="582" width="1" height="73"/>
<rect x="682" y="582" width="1" height="77"/>
<rect x="690" y="582" width="1" height="76"/>
<rect x="698" y="582" width="1" height="73"/>
<rect x="706" y="582" width="1" height="69"/>
<rect x="714" y="582" width="1" height="66"/>
<rect x="722" y="582" width="1" height="63"/>
<rect x="730" y="582" width="1" height="56"/>
<rect x="738" y="582" width="1" height="53"/>
<rect x="746" y="582" width="1" height="51"/>
<rect x="754" y="582" width="1" height="50"/>
<rect x="762" y="582" width="1" height="53"/>
<rect x="770" y="582" width="1" height="54"/>
<rect x="778" y="582" width="1" height="53"/>
<rect x="786" y="582" width="1" height="50"/>
<rect x="794" y="582" width="1" height="47"/>
<rect x="802" y="582" width="1" height="43"/>
<rect x="810" y="582" width="1" height="43"/>
<rect x="818" y="582" width="1" height="43"/>
<rect x="826" y="582" width="1" height="40"/>
<rect x="834" y="582" width="1" height="37"/>
<rect x="842" y="582" width="1" height="30"/>
<rect x="850" y="582" width="1" height="26"/>
<rect x="858" y="582" width="1" height="19"/>
<rect x="866" y="582" width="1" height="16"/>
<rect x="874" y="582" width="1" height="18"/>
<rect x="882" y="582" width="1" height="14"/>
<rect x="890" y="582" width="1" height="7"/>
<rect x="898" y="579" width="1" height="4"/>
<rect x="906" y="575" width="1" height="8"/>
<rect x="914" y="569" width="1" height="14"/>
<rect x="922" y="566" width="1" height="17"/>
<rect x="930" y="565" width="1" height="18"/>
<rect x="938" y="564" width="1" height="19"/>
<rect x="946" y="556" width="1" height="27"/>
</g>
<polyline points="2.5,595 18.5,590 34.5,586.75 42.5,586.5 50.5,587.5 66.5,591.25 82.5,598.75 98.5,612.5 114.5,630 130.5,645 146.5,656.25 162.5,664.5 178.5,669.25 194.5,670.5 202.5,670.5 218.5,666.25 234.5,658.75 250.5,650 266.5,641.75 282.5,632.5 290.5,627.5 298.5,621.25 306.5,614.5 314.5,607.5 322.5,601.5 330.5,593.75 338.5,583.75 346.5,574.5 354.5,565 362.5,556.25 370.5,550 378.5,545 386.5,542.5 394.5,543.75 402.5,547 410.5,551.25 418.5,557.5 426.5,563.75 434.5,569.5 442.5,576.25 450.5,584.25 458.5,591.25 466.5,598.75 474.5,605 482.5,610 490.5,614.5 498.5,617.5 506.5,620.5 514.5,622 530.5,622 538.5,620.75 554.5,617 570.5,614.25 578.5,612.5 586.5,612.5 594.5,613.25 602.5,615.75 610.5,620 618.5,623.75 626.5,628.25 634.5,632.5 642.5,636.75 650.5,641.25 658.5,644.25 666.5,646.75 674.5,649.25 682.5,651.5 706.5,651.75 717.5,651.25 730.5,650 746.5,645.75 762.5,640.75 770.5,638.75 786.5,635 802.5,631.25 818.5,629.5 834.5,627.5 850.5,621.25 866.5,614.25 882.5,608.25 898.5,600 906.5,594.5 914.5,590 922.5,585 930.5,580.75 938.5,578 946.5,574.25" fill="none" stroke="#00ff00" stroke-width="1.1" shape-rendering="crispEdges"/>
</g>
<rect x="3" y="519" width="225" height="21" fill="#000"/>
<text x="5.5" y="537" textLength="220.5" lengthAdjust="spacingAndGlyphs" >MACD(12,26,9) 0.2344 0.0824</text>
<g clip-path="url(#call)" stroke="#ff0000" stroke-width="1" stroke-dasharray="18 6" shape-rendering="crispEdges">
<line x1="283.5" y1="3" x2="283.5" y2="692"/>
<line x1="331.5" y1="3" x2="331.5" y2="692"/>
<line x1="379.5" y1="3" x2="379.5" y2="692"/>
<line x1="427.5" y1="3" x2="427.5" y2="692"/>
</g>
<g clip-path="url(#cm)">
<text transform="translate(141 152) rotate(90)" textLength="145" lengthAdjust="spacingAndGlyphs">152.764 -&gt; 152.139</text>
<text transform="translate(276.5 146) rotate(-90)" textLength="145" lengthAdjust="spacingAndGlyphs">152.317 -&gt; 152.427</text>
<text transform="translate(298 119) rotate(-90)" textLength="145" lengthAdjust="spacingAndGlyphs">152.938 -&gt; 153.386</text>
<text transform="translate(287.6 146.7) rotate(78)" textLength="140" lengthAdjust="spacingAndGlyphs">152.696 -&gt; 152.256</text>
<text transform="translate(261.9 161.2) rotate(26.5)" textLength="140" lengthAdjust="spacingAndGlyphs">152.483 -&gt; 151.870</text>
<polygon points="137.5,155.6 145.5,164.1 142.0,164.1 142.0,168.6 133.0,168.6 133.0,164.1 129.5,164.1" fill="#1558a8" stroke="#fff" stroke-width="1"/>
<polygon points="137.5,152.5 145.5,144.0 142.0,144.0 142.0,139.5 133.0,139.5 133.0,144.0 129.5,144.0" fill="#e0421c" stroke="#fff" stroke-width="1"/>
<polygon points="259.4,162.5 267.4,171.0 263.9,171.0 263.9,175.5 254.9,175.5 254.9,171.0 251.4,171.0" fill="#1558a8" stroke="#fff" stroke-width="1"/>
<polygon points="268.0,165.5 276.0,157.0 272.5,157.0 272.5,152.5 263.5,152.5 263.5,157.0 260.0,157.0" fill="#e0421c" stroke="#fff" stroke-width="1"/>
<polygon points="278.0,145.0 286.0,153.5 282.5,153.5 282.5,158.0 273.5,158.0 273.5,153.5 270.0,153.5" fill="#1558a8" stroke="#fff" stroke-width="1"/>
<polygon points="279.0,146.5 287.0,138.0 283.5,138.0 283.5,133.5 274.5,133.5 274.5,138.0 271.0,138.0" fill="#e0421c" stroke="#fff" stroke-width="1"/>
<polygon points="282.5,145.5 290.5,154.0 287.0,154.0 287.0,158.5 278.0,158.5 278.0,154.0 274.5,154.0" fill="#1558a8" stroke="#fff" stroke-width="1"/>
<polygon points="283.5,147.5 291.5,139.0 288.0,139.0 288.0,134.5 279.0,134.5 279.0,139.0 275.5,139.0" fill="#e0421c" stroke="#fff" stroke-width="1"/>
<polygon points="302.5,122.5 310.5,131.0 307.0,131.0 307.0,135.5 298.0,135.5 298.0,131.0 294.5,131.0" fill="#1558a8" stroke="#fff" stroke-width="1"/>
<polygon points="303.8,110.5 311.8,102.0 308.2,102.0 308.2,97.5 299.2,97.5 299.2,102.0 295.8,102.0" fill="#e0421c" stroke="#fff" stroke-width="1"/>
</g>
<g fill="none" stroke="#fff" stroke-width="1" stroke-linecap="square" stroke-linejoin="round" shape-rendering="crispEdges">
<polyline points="996,50.4 1005.1,49.4"/>
<polyline points="994.9,55 1005.8,55"/>
<polyline points="1001.25,49.9 1001.25,58.5 999.8,61 997,62.7"/>
<polyline points="1007.9,56.8 1017,55 1014.3,59.2"/>
<polyline points="1010.4,52.5 1012.5,62.7"/>
<polyline points="1021,54.3 1023,55.7 1030.8,55.7"/>
<polyline points="1033.5,49 1033.5,62.7"/>
<polyline points="1033.5,53.6 1040.6,56.8"/>
<polyline points="1043,63.4 1059.3,63.4"/>
<polyline points="1060.3,50.8 1068.4,50.8 1064.5,57 1059.3,63"/>
<polyline points="1065.2,56.8 1069.8,62.7"/>
<polyline points="1073.9,48.3 1071.3,56.5"/>
<polyline points="1073.9,50.9 1079.8,50.9 1079.5,56.8 1076.1,60.6 1072,62.4"/>
<polyline points="1083.6,49 1083.6,56.1"/>
<polyline points="1089.1,48.7 1089.1,58 1087.6,61.3 1085,62.4"/>
<polyline points="1093.2,54.2 1094.7,55.7 1102.9,55.7"/>
<polyline points="1104.3,50.2 1108.8,53.5"/>
<polyline points="1114,53.1 1113.3,57.2 1108.8,61.7 1104,62.4"/>
<polyline points="1117,49 1121.8,51.6"/>
<polyline points="1116.2,53.1 1121,55.4"/>
<polyline points="1127,53.1 1126.2,57.2 1121.8,61.7 1117,62.4"/>
<polyline points="1129.2,53.1 1134.8,53.1 1134.8,62 1129.2,62"/>
<polyline points="1130,57.6 1134.8,57.6"/>
<polyline points="1138.1,53.9 1139.2,58"/>
<polyline points="1141.5,53.1 1142.6,57.2"/>
<polyline points="1145.5,53.1 1144.8,58 1141.8,61.7 1138.5,62.4"/>
<polyline points="1147.8,48.7 1147.8,62.8"/>
<polyline points="1147.8,53.5 1154.8,57.2"/>
</g>
<rect x="1168.7" y="46.7" width="14.8" height="17.2" fill="#f8cc00" stroke="#c08a0a" stroke-width="1.6"/>
<path d="M1166.8,59 H1176.6 Q1178,59 1178,61 V64 Q1178,65.6 1176.4,65.6 H1167.6 Q1164.8,65.6 1164.8,62.2 Q1164.8,59 1166.8,59 Z" fill="#f8cc00" stroke="#c08a0a" stroke-width="1.3"/>
<g shape-rendering="crispEdges" fill="#fff">
<rect x="2" y="2" width="1192" height="1"/>
<rect x="2" y="344" width="1192" height="1"/>
<rect x="2" y="2" width="1" height="343"/>
<rect x="1193" y="2" width="1" height="343"/>
<rect x="2" y="346" width="1192" height="1"/>
<rect x="2" y="515" width="1192" height="1"/>
<rect x="2" y="346" width="1" height="170"/>
<rect x="1193" y="346" width="1" height="170"/>
<rect x="2" y="517" width="1192" height="1"/>
<rect x="2" y="691" width="1192" height="1"/>
<rect x="2" y="517" width="1" height="175"/>
<rect x="1193" y="517" width="1" height="175"/>
<rect x="1194" y="24" width="4" height="1"/>
<rect x="1194" y="88" width="4" height="1"/>
<rect x="1194" y="152" width="4" height="1"/>
<rect x="1194" y="216" width="4" height="1"/>
<rect x="1194" y="280" width="4" height="1"/>
<rect x="1194" y="347" width="4" height="1"/>
<rect x="1194" y="397" width="4" height="1"/>
<rect x="1194" y="464" width="4" height="1"/>
<rect x="1194" y="514" width="4" height="1"/>
<rect x="1194" y="518" width="4" height="1"/>
<rect x="1194" y="582" width="4" height="1"/>
<rect x="1194" y="690" width="4" height="1"/>
<rect x="2" y="692" width="1" height="4"/>
<rect x="130" y="692" width="1" height="4"/>
<rect x="258" y="692" width="1" height="4"/>
<rect x="386" y="692" width="1" height="4"/>
<rect x="514" y="692" width="1" height="4"/>
<rect x="642" y="692" width="1" height="4"/>
<rect x="770" y="692" width="1" height="4"/>
<rect x="898" y="692" width="1" height="4"/>
</g>
<text x="1200.5" y="31" textLength="56.5" lengthAdjust="spacingAndGlyphs" >155.280</text>
<text x="1200.5" y="95" textLength="56.5" lengthAdjust="spacingAndGlyphs" >153.740</text>
<text x="1200.5" y="159" textLength="56.5" lengthAdjust="spacingAndGlyphs" >152.200</text>
<text x="1200.5" y="223" textLength="56.5" lengthAdjust="spacingAndGlyphs" >150.660</text>
<text x="1200.5" y="287" textLength="56.5" lengthAdjust="spacingAndGlyphs" >149.120</text>
<text x="1200.5" y="362" textLength="47.5" lengthAdjust="spacingAndGlyphs" >100.00</text>
<text x="1199.5" y="404" textLength="38.5" lengthAdjust="spacingAndGlyphs" >70.00</text>
<text x="1199.5" y="471" textLength="38.5" lengthAdjust="spacingAndGlyphs" >30.00</text>
<text x="1199.5" y="512" textLength="29.5" lengthAdjust="spacingAndGlyphs" >0.00</text>
<text x="1199.5" y="533" textLength="47.5" lengthAdjust="spacingAndGlyphs" >0.5825</text>
<text x="1199.5" y="589" textLength="47.5" lengthAdjust="spacingAndGlyphs" >0.0000</text>
<text x="1199" y="688" textLength="55" lengthAdjust="spacingAndGlyphs" >-0.9696</text>
<rect x="1196" y="182" width="69" height="20" fill="#778899" shape-rendering="crispEdges"/>
<rect x="1196" y="182" width="69" height="1" fill="#ff0000" shape-rendering="crispEdges"/>
<text x="1202" y="199" textLength="57" lengthAdjust="spacingAndGlyphs" style="fill:#000;stroke:#778899" >151.232</text>
<text x="3" y="711" textLength="78.5" lengthAdjust="spacingAndGlyphs" >3 Feb 2025</text>
<text x="129.5" y="711" textLength="84.5" lengthAdjust="spacingAndGlyphs" >6 Feb 12:00</text>
<text x="515" y="711" textLength="93" lengthAdjust="spacingAndGlyphs" >18 Feb 12:00</text>
<text x="643" y="711" textLength="93" lengthAdjust="spacingAndGlyphs" >21 Feb 04:00</text>
<text x="771" y="711" textLength="93" lengthAdjust="spacingAndGlyphs" >25 Feb 20:00</text>
<text x="899" y="711" textLength="93" lengthAdjust="spacingAndGlyphs" >28 Feb 12:00</text>
<rect x="214" y="696" width="139" height="19" fill="#ff0000" shape-rendering="crispEdges"/>
<text x="219" y="711.5" textLength="127" lengthAdjust="spacingAndGlyphs" style="fill:#000;stroke:#ff0000" >2025.02.13 16:30</text>
<rect x="262" y="696" width="139" height="19" fill="#ff0000" shape-rendering="crispEdges"/>
<text x="267" y="711.5" textLength="127" lengthAdjust="spacingAndGlyphs" style="fill:#000;stroke:#ff0000" >2025.02.13 20:30</text>
<rect x="310" y="696" width="139" height="19" fill="#ff0000" shape-rendering="crispEdges"/>
<text x="315" y="711.5" textLength="127" lengthAdjust="spacingAndGlyphs" style="fill:#000;stroke:#ff0000" >2025.02.14 12:30</text>
<rect x="358" y="696" width="139" height="19" fill="#ff0000" shape-rendering="crispEdges"/>
<text x="363" y="711.5" textLength="127" lengthAdjust="spacingAndGlyphs" style="fill:#000;stroke:#ff0000" >2025.02.14 16:30</text>
</svg></body></html>
